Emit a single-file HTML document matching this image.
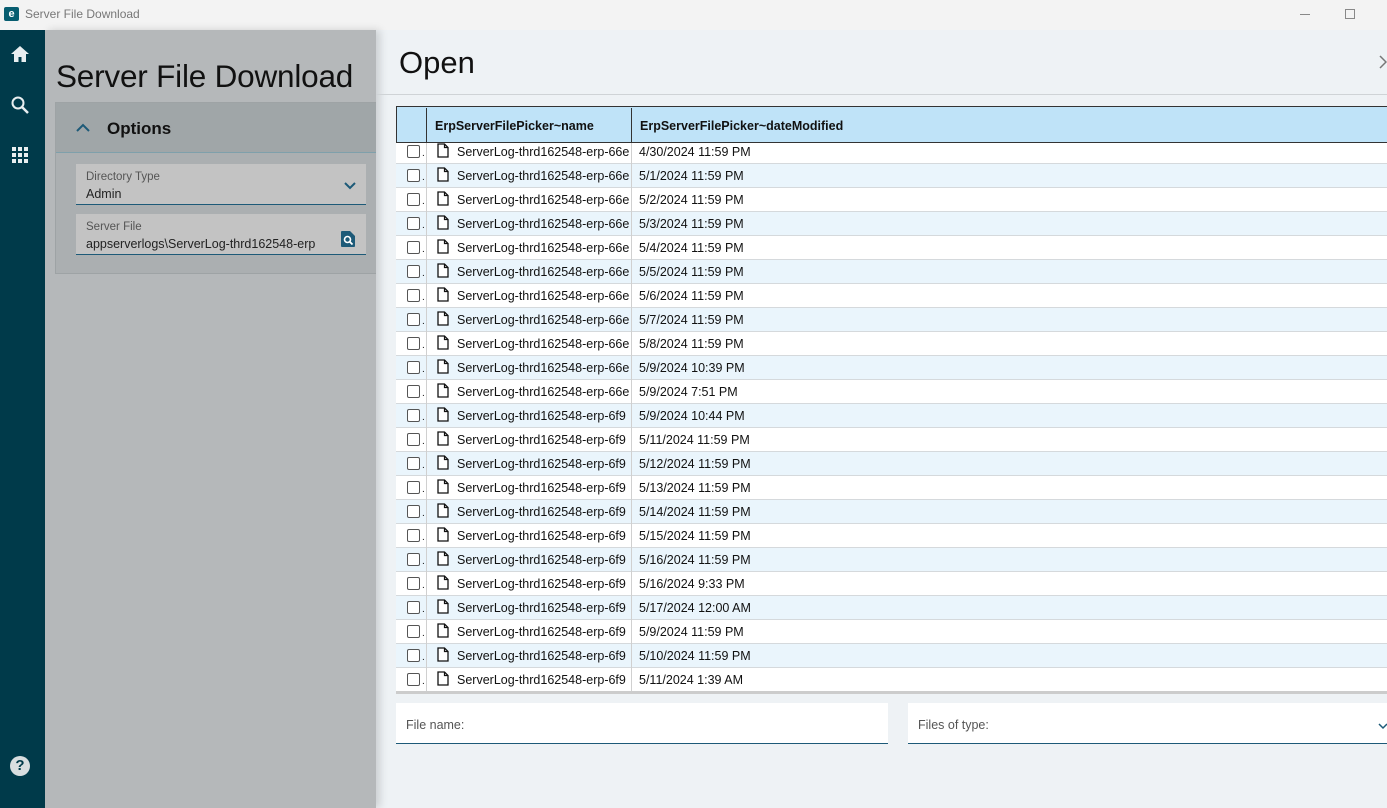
<!DOCTYPE html>
<html><head><meta charset="utf-8"><style>
*{box-sizing:border-box;margin:0;padding:0}
body{width:1387px;height:808px;overflow:hidden;font-family:"Liberation Sans",sans-serif;background:#eef2f5;position:relative}
.tb{position:absolute;left:0;top:0;width:1387px;height:30px;background:#f3f3f3;}
.tb .t{position:absolute;left:25px;top:7px;font-size:12px;color:#777}
.logo{position:absolute;left:4px;top:7px;width:15px;height:14px;background:#075d70;border-radius:2px;color:#fff;font-size:11px;font-weight:bold;text-align:center;line-height:14px}
.side{position:absolute;left:0;top:30px;width:45px;height:778px;background:#003a4a}
.gp{position:absolute;left:45px;top:30px;width:331px;height:778px;background:#b5b8ba;box-shadow:4px 0 8px rgba(0,0,0,.15)}
.h1{position:absolute;left:56px;top:58px;font-size:31.5px;color:#111;letter-spacing:-0.2px}
.card{position:absolute;left:55px;top:102px;width:321px;height:172px;background:#abafb1;border:1px solid #9ea3a5;border-right:none}
.card .hd{height:50px;background:#a0a6a8;border-bottom:1px solid #7fa0ab;position:relative}
.card .hd span{position:absolute;left:51px;top:16px;font-size:17px;font-weight:bold;color:#111}
.fld{position:absolute;left:20px;width:290px;height:41px;background:#c3c3c3;border-bottom:1px solid #1d5a78}
.fld .l{position:absolute;left:10px;top:7px;font-size:11.5px;color:#555}
.fld .v{position:absolute;left:10px;top:23px;font-size:12.5px;color:#222;white-space:nowrap}
.open{position:absolute;left:399px;top:45px;font-size:31px;color:#111}
.hr{position:absolute;left:376px;top:94px;width:1011px;height:1px;background:#cfd3d6}
.tbl{position:absolute;left:396px;top:106px;width:991px;height:588px;background:#fff;overflow:hidden}
.th{position:absolute;left:0;top:0;height:37px;width:991px;background:#bfe3f8;border:1px solid #333;border-right:none}
.th div{position:absolute;top:1px;height:35px;line-height:36px;font-size:12.5px;color:#111;border-left:1px solid #333}
.rows{position:absolute;left:0;top:37px;width:991px;height:548px;overflow:hidden}
.r{position:absolute;left:0;width:991px;height:24px;border-bottom:1px solid #d5d9dc;font-size:12.5px;color:#111}
.r.a{background:#eaf5fc}
.r .cb{position:absolute;left:11px;top:5px;width:13px;height:13px;border:1px solid #555;border-radius:2px;background:#fff}
.r .dot{position:absolute;left:26px;top:8px;font-size:10px}
.r .c1{position:absolute;left:30px;top:0;width:1px;height:24px;background:#d0d0d0}
.r .c2{position:absolute;left:235px;top:0;width:1px;height:24px;background:#d0d0d0}
.r .n{position:absolute;left:61px;top:5px;width:173px;overflow:hidden;white-space:nowrap}
.r .d{position:absolute;left:243px;top:5px;white-space:nowrap}
.r svg{position:absolute;left:41px;top:3px}
.bt{position:absolute;left:0;top:585px;width:991px;height:3px;background:#ccc}
.in{position:absolute;top:703px;height:41px;background:#fff;border-bottom:1px solid #1d5a78;font-size:12.5px;color:#555}
.in span{position:absolute;left:10px;top:15px}
</style></head><body>
<div class="tb"><div class="logo">e</div><div class="t">Server File Download</div>
<div style="position:absolute;left:1300px;top:14px;width:10px;height:1px;background:#888"></div>
<div style="position:absolute;left:1345px;top:9px;width:10px;height:10px;border:1px solid #888"></div></div>
<div class="side">
<svg style="position:absolute;left:10px;top:15px" width="20" height="18" viewBox="0 0 20 18"><path d="M10 1L1 9h3v8h4.5v-5h3v5H16V9h3z" fill="#e8eef0"/></svg>
<svg style="position:absolute;left:10px;top:65px" width="20" height="20" viewBox="0 0 20 20"><circle cx="8" cy="8" r="5.5" stroke="#e8eef0" stroke-width="2" fill="none"/><path d="M12 12l6 6" stroke="#e8eef0" stroke-width="2.5"/></svg>
<svg style="position:absolute;left:12px;top:117px" width="17" height="17" viewBox="0 0 17 17" fill="#e8eef0"><rect x="0" y="0" width="4" height="4"/><rect x="6" y="0" width="4" height="4"/><rect x="12" y="0" width="4" height="4"/><rect x="0" y="6" width="4" height="4"/><rect x="6" y="6" width="4" height="4"/><rect x="12" y="6" width="4" height="4"/><rect x="0" y="12" width="4" height="4"/><rect x="6" y="12" width="4" height="4"/><rect x="12" y="12" width="4" height="4"/></svg>
<div style="position:absolute;left:10px;top:726px;width:20px;height:20px;border-radius:50%;background:#d8dee0;color:#003a4a;font-weight:bold;font-size:15px;text-align:center;line-height:20px">?</div>
</div>
<div class="gp"></div>
<div class="h1">Server File Download</div>
<div class="card"><div class="hd"><svg style="position:absolute;left:20px;top:20px" width="14" height="9" viewBox="0 0 14 9"><path d="M1 8l6-6 6 6" stroke="#1d5a78" stroke-width="2" fill="none"/></svg><span>Options</span></div>
<div class="fld" style="top:61px"><div class="l">Directory Type</div><div class="v">Admin</div><svg style="position:absolute;left:268px;top:18px" width="12" height="8" viewBox="0 0 12 8"><path d="M1 1l5 5 5-5" stroke="#1d5a78" stroke-width="2" fill="none"/></svg></div>
<div class="fld" style="top:111px"><div class="l">Server File</div><div class="v" style="width:242px;overflow:hidden">appserverlogs\ServerLog-thrd162548-erp</div><svg style="position:absolute;left:265px;top:17px" width="14" height="16" viewBox="0 0 14 16"><path d="M0 1a1 1 0 011-1h8l5 5v10a1 1 0 01-1 1H1a1 1 0 01-1-1z" fill="#1d5a78"/><circle cx="6.5" cy="8.5" r="3" stroke="#fff" stroke-width="1.6" fill="none"/><path d="M8.5 10.5l3 3" stroke="#fff" stroke-width="1.8"/></svg></div>
</div>
<div class="open">Open</div>
<svg style="position:absolute;left:1379px;top:55px" width="8" height="14" viewBox="0 0 8 14"><path d="M1 1l6 6-6 6" stroke="#777" stroke-width="1.5" fill="none"/></svg>
<div class="hr"></div>
<div class="tbl">
<div class="th"><div style="left:29px;width:205px;padding-left:8px;font-weight:bold">ErpServerFilePicker~name</div><div style="left:234px;width:760px;padding-left:8px;font-weight:bold">ErpServerFilePicker~dateModified</div></div>
<div class="rows" id="rows"></div>
<div class="bt"></div>
</div>
<div class="in" style="left:396px;width:492px"><span>File name:</span></div>
<div class="in" style="left:908px;width:479px"><span>Files of type:</span><svg style="position:absolute;left:470px;top:20px" width="10" height="7" viewBox="0 0 10 7"><path d="M1 1l4 4 4-4" stroke="#1d5a78" stroke-width="1.5" fill="none"/></svg></div>
<script>
var d=["4/30/2024 11:59 PM","5/1/2024 11:59 PM","5/2/2024 11:59 PM","5/3/2024 11:59 PM","5/4/2024 11:59 PM","5/5/2024 11:59 PM","5/6/2024 11:59 PM","5/7/2024 11:59 PM","5/8/2024 11:59 PM","5/9/2024 10:39 PM","5/9/2024 7:51 PM","5/9/2024 10:44 PM","5/11/2024 11:59 PM","5/12/2024 11:59 PM","5/13/2024 11:59 PM","5/14/2024 11:59 PM","5/15/2024 11:59 PM","5/16/2024 11:59 PM","5/16/2024 9:33 PM","5/17/2024 12:00 AM","5/9/2024 11:59 PM","5/10/2024 11:59 PM","5/11/2024 1:39 AM"];
var h="";for(var i=0;i<d.length;i++){h+='<div class="r'+(i%2?' a':'')+'" style="top:'+(i*24-3)+'px"><div class="cb"></div><div class="dot">.</div><div class="c1"></div><svg width="12" height="15" viewBox="0 0 12 15"><path d="M1 1h6.5L11 4.5V14H1z" stroke="#111" stroke-width="1.3" fill="#fff"/><path d="M7.5 1v3.5H11" stroke="#111" stroke-width="1.2" fill="none"/></svg><div class="n">ServerLog-thrd162548-erp-'+(i<11?'66e':'6f9')+'</div><div class="c2"></div><div class="d">'+d[i]+'</div></div>';}
document.getElementById("rows").innerHTML=h;
</script>
</body></html>
